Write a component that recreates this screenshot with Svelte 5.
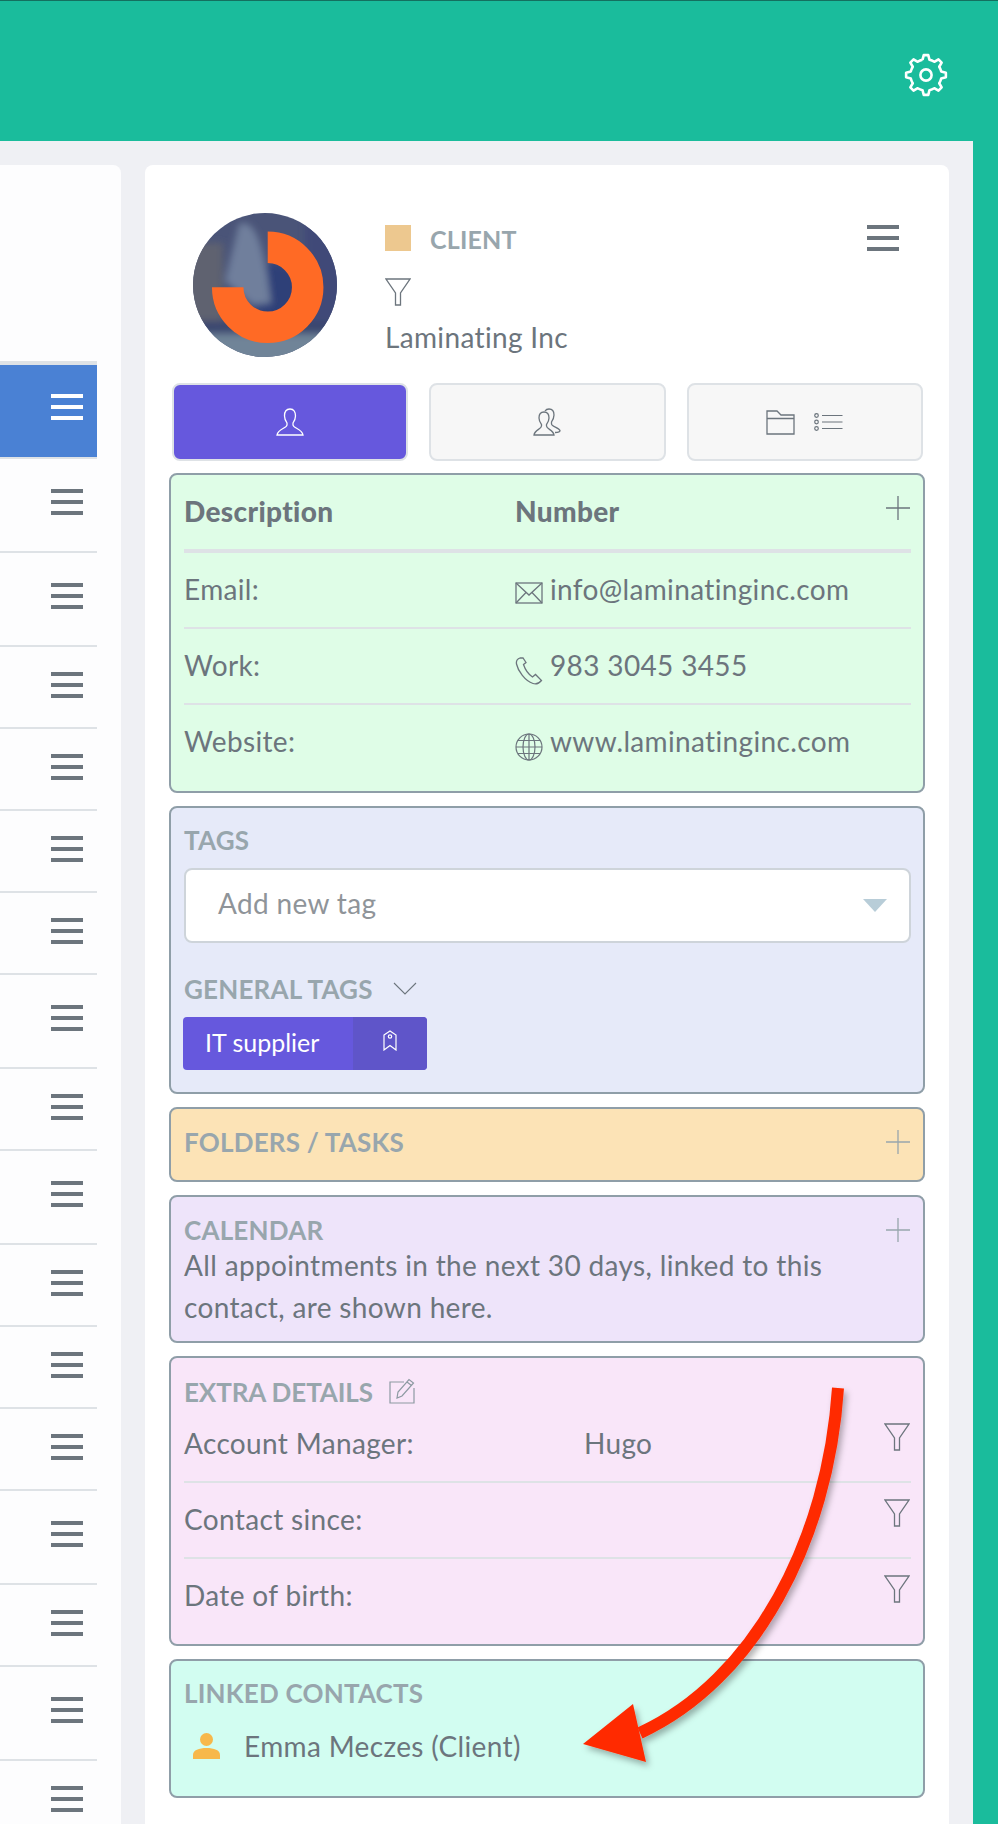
<script>
  // left list: only the menu icons are visible, rows vary in height
  const rowKinds = ['m', 't', 't', 's', 's', 's', 's', 't', 's', 't', 's', 's', 's', 't', 's', 't', 's']

  const contacts = [
    { label: 'Email:', value: 'info@laminatinginc.com', icon: 'mail' },
    { label: 'Work:', value: '983 3045 3455', icon: 'phone' },
    { label: 'Website:', value: 'www.laminatinginc.com', icon: 'globe' }
  ]
  const extras = [
    { label: 'Account Manager:', value: 'Hugo' },
    { label: 'Contact since:', value: '' },
    { label: 'Date of birth:', value: '' }
  ]

  function gearPath() {
    let d = ''
    for (let i = 0; i < 8; i++) {
      const a = (i * 45 - 90) * Math.PI / 180
      const pts = [[-13, 15.6], [-6.5, 20], [6.5, 20], [13, 15.6]].map(([o, r]) => {
        const t = a + o * Math.PI / 180
        return (22 + r * Math.cos(t)).toFixed(2) + ' ' + (22 + r * Math.sin(t)).toFixed(2)
      })
      d += (i === 0 ? 'M' : 'A15.6 15.6 0 0 1 ') + pts[0] + ' L' + pts[1] + ' L' + pts[2] + ' L' + pts[3] + ' '
    }
    return d + 'A15.6 15.6 0 0 1 ' + (22 + 15.6 * Math.cos((-103) * Math.PI / 180)).toFixed(2) + ' ' + (22 + 15.6 * Math.sin((-103) * Math.PI / 180)).toFixed(2)
  }
</script>

{#snippet burger(light)}
  <div class="burger" class:light><i></i><i></i><i></i></div>
{/snippet}

{#snippet funnel()}
  <svg class="funnel" viewBox="0 0 26 28" fill="none" stroke="currentColor" stroke-width="1.3">
    <path d="M1 1 H25 L15.5 15 V27 H10.5 V15 Z" />
  </svg>
{/snippet}

{#snippet plus()}
  <svg class="plus" viewBox="0 0 24 24" stroke="currentColor" stroke-width="1.3"><path d="M12 0 V24 M0 12 H24" /></svg>
{/snippet}

<div class="page">
  <header class="topbar">
    <svg class="gear" viewBox="0 0 44 44" fill="none" stroke="#fff" stroke-width="2.6" stroke-linejoin="round">
      <path d={gearPath()} />
      <circle cx="22" cy="22" r="5.6" />
    </svg>
  </header>

  <div class="content">
    <aside class="list">
      {#each rowKinds as kind}
        <div class="row {kind}">{@render burger(kind === 'm')}</div>
      {/each}
    </aside>

    <section class="detail">
      <div class="profile">
        <svg class="avatar" viewBox="0 0 144 144">
          <defs>
            <clipPath id="round"><circle cx="72" cy="72" r="72" /></clipPath>
            <filter id="soft" x="-20%" y="-20%" width="140%" height="140%"><feGaussianBlur stdDeviation="3.5" /></filter>
          </defs>
          <g clip-path="url(#round)">
            <rect width="144" height="144" fill="#4a5478" />
            <g filter="url(#soft)">
              <rect x="-10" y="30" width="40" height="80" fill="#5e6270" />
              <rect x="112" y="0" width="40" height="110" fill="#3f4a78" />
              <circle cx="82" cy="78" r="28" fill="#2f4078" />
              <path d="M46 11 C62 6 68 30 74 60 L78 90 L60 92 L32 68 Z" fill="#6f7f9c" />
              <rect x="-10" y="108" width="170" height="12" fill="#3b4670" />
              <rect x="-10" y="121" width="170" height="30" fill="#6f8498" />
            </g>
            <path d="M74.7 34.3 A40 40 0 1 1 34.7 74.3" fill="none" stroke="#ff6a25" stroke-width="31.5" />
          </g>
        </svg>
        <div class="who">
          <div class="kind"><span class="swatch"></span><span class="label">CLIENT</span></div>
          <div class="who-filter">{@render funnel()}</div>
          <div class="name">Laminating Inc</div>
        </div>
        <div class="who-menu">{@render burger(false)}</div>
      </div>

      <div class="tabs">
        <div class="tab active">
          <svg class="ic28" viewBox="0 0 28 28" fill="none" stroke="#fff" stroke-width="1.3">
            <path d="M14 1 C10 1 8.5 4 8.5 8 C8.5 11 10 13.5 11 15 V17 C11 20 2 21 1 27 H27 C26 21 17 20 17 17 V15 C18 13.5 19.5 11 19.5 8 C19.5 4 18 1 14 1 Z" />
          </svg>
        </div>
        <div class="tab">
          <svg class="ic28" viewBox="0 0 28 28" fill="none" stroke="#6c757d" stroke-width="1.3">
            <path d="M11 4 C7.5 4 6 7 6 10 C6 13 7.5 15 8.5 16.5 V18 C8.5 21 1.5 22 1 27 H21 C20.5 22 13.5 21 13.5 18 V16.5 C14.5 15 16 13 16 10 C16 7 14.500 4 11 4 Z" />
            <path d="M12 3 C13 1.500 14.500 1 16 1 C19.500 1 21 4 21 7 C21 10 19.500 12.500 18.500 14 V16 C18.500 18.500 26 19.500 27 22.500 C27 24 25 24.500 22 24.500" />
          </svg>
        </div>
        <div class="tab">
          <svg class="folder" viewBox="0 0 29 25" fill="none" stroke="#6c757d" stroke-width="1.3">
            <path d="M1 24 V1 H11 L15 5 H28 V24 Z M1 8.500 H28" />
          </svg>
          <svg class="tasks" viewBox="0 0 29 18" fill="none" stroke="#6c757d" stroke-width="1.2">
            <circle cx="2.500" cy="2.500" r="1.800" /><circle cx="2.500" cy="9" r="1.800" /><circle cx="2.500" cy="15.500" r="1.800" />
            <path d="M8 2.500 H28.500 M8 9 H28.500 M8 15.500 H28.500" />
          </svg>
        </div>
      </div>

      <div class="card green">
        <div class="line head">
          <strong class="col">Description</strong>
          <strong>Number</strong>
          <span class="tr">{@render plus()}</span>
        </div>
        {#each contacts as c}
          <div class="line contact">
            <span class="col">{c.label}</span>
            {#if c.icon === 'mail'}
              <svg class="ci" viewBox="0 0 28 22" fill="none" stroke="#6c757d" stroke-width="1.300">
                <rect x="1" y="1" width="26" height="20" /><path d="M1 1 L14 13 L27 1 M1 21 L11 10.500 M27 21 L17 10.500" />
              </svg>
            {:else if c.icon === 'phone'}
              <svg class="ci tall" viewBox="0 0 28 28" fill="none" stroke="#6c757d" stroke-width="1.300">
                <path d="M5 1 C2 2 1 4 1.500 7 C3 14 10 24 18 26.500 C21 27.500 24 26.500 26.500 23.500 L20.500 17.500 L17.500 20 C13 17 10 12 8.500 7.500 L11 5.500 L8 1 Z" />
              </svg>
            {:else}
              <svg class="ci tall" viewBox="0 0 28 28" fill="none" stroke="#6c757d" stroke-width="1.200">
                <circle cx="14" cy="14" r="13" /><ellipse cx="14" cy="14" rx="6" ry="13" /><path d="M14 1 V27 M1 14 H27 M3 7.500 H25 M3 20.500 H25" />
              </svg>
            {/if}
            <span class="val">{c.value}</span>
          </div>
        {/each}
      </div>

      <div class="card tags">
        <div class="label">TAGS</div>
        <div class="select">
          <span>Add new tag</span>
          <i class="caret"></i>
        </div>
        <div class="label general">
          GENERAL TAGS
          <svg class="chev" viewBox="0 0 24 13" fill="none" stroke="#6c757d" stroke-width="1.100"><path d="M1 1 L12 12 L23 1" /></svg>
        </div>
        <div class="tag">
          <span class="tag-name">IT supplier</span>
          <span class="tag-side">
            <svg viewBox="0 0 14 21" fill="none" stroke="#fff" stroke-width="1.200">
              <path d="M1 5 L7 1 L13 5 V20 L7 15.500 L1 20 Z" /><circle cx="7" cy="6.500" r="1.700" />
            </svg>
          </span>
        </div>
      </div>

      <div class="card folders">
        <div class="titled">
          <span class="label">FOLDERS / TASKS</span>
          <span class="pale">{@render plus()}</span>
        </div>
      </div>

      <div class="card calendar">
        <div class="titled">
          <span class="label">CALENDAR</span>
          <span class="pale">{@render plus()}</span>
        </div>
        <p>All appointments in the next 30 days, linked to this contact, are shown here.</p>
      </div>

      <div class="card extra">
        <div class="label edit-row">
          EXTRA DETAILS
          <svg class="edit" viewBox="0 0 26 26" fill="none" stroke="#8d9aa2" stroke-width="1.200">
            <path d="M15 4 H1 V25 H25 V10" />
            <path d="M8 20 L9 14 L20 1.500 L24.500 5 L13 18 Z M18 4 L22.500 7.500" />
          </svg>
        </div>
        {#each extras as e}
          <div class="line detail-row">
            <span class="col-wide">{e.label}</span>
            <span>{e.value}</span>
            <span class="tr funnel-tr">{@render funnel()}</span>
          </div>
        {/each}
      </div>

      <div class="card linked">
        <div class="label">LINKED CONTACTS</div>
        <div class="person">
          <svg viewBox="0 0 27 26" fill="#f7b84b">
            <ellipse cx="13.500" cy="6.500" rx="6.500" ry="6.500" />
            <path d="M0 26 V22 C0 17 6 15 13.500 15 C21 15 27 17 27 22 V26 Z" />
          </svg>
          <span>Emma Meczes (Client)</span>
        </div>
      </div>
    </section>
  </div>

  <!-- annotation drawn over the screenshot -->
  <svg class="arrow" viewBox="0 0 998 1824">
    <defs>
      <filter id="arrow-shadow" x="-20%" y="-20%" width="140%" height="140%">
        <feDropShadow dx="3" dy="4" stdDeviation="3" flood-color="#000" flood-opacity="0.3" />
      </filter>
    </defs>
    <g filter="url(#arrow-shadow)">
      <path d="M838 1388 C828 1540 755 1680 640 1733" fill="none" stroke="#ff2a00" stroke-width="12" />
      <path d="M583 1744 L633 1704 L646 1762 Z" fill="#ff2a00" />
    </g>
  </svg>
</div>

<style>
  :global(body) {
    background: #1abc9c;
  }

  .page {
    position: relative;
    width: 998px;
    height: 1824px;
    overflow: hidden;
    font-family: Lato, "Liberation Sans", sans-serif;
    font-size: 28px;
    letter-spacing: 0.35px;
    line-height: 42px;
    color: #6c757d;
  }

  .topbar {
    height: 140px;
    border-top: 1px solid #14705f;
    background: #1abc9c;
    display: flex;
    justify-content: flex-end;
    align-items: flex-start;
    padding-right: 50px;
  }

  .gear {
    width: 44px;
    height: 44px;
    margin-top: 52px;
  }

  .content {
    width: 973px;
    height: 1683px;
    box-sizing: border-box;
    background: #eff0f4;
    padding: 24px 24px 0 0;
    display: flex;
    gap: 24px;
  }

  .list {
    width: 121px;
    flex: none;
    box-sizing: border-box;
    padding: 196px 24px 0 0;
    background: #fdfdfe;
    border-radius: 0 8px 0 0;
  }

  .row {
    box-sizing: border-box;
    border-bottom: 2px solid #dee2e6;
    padding-left: 51px;
  }

  .row.m {
    height: 98px;
    border-top: 4px solid #dee2e6;
    background: #4a81d4;
    padding-top: 29px;
  }

  .row.t {
    height: 94px;
    padding-top: 30px;
  }

  .row.s {
    height: 82px;
    padding-top: 25px;
  }

  .burger {
    width: 32px;
    display: flex;
    flex-direction: column;
    gap: 7px;
  }

  .burger i {
    display: block;
    height: 4px;
    background: #6c757d;
  }

  .burger.light i {
    background: #fff;
  }

  .detail {
    width: 804px;
    flex: none;
    box-sizing: border-box;
    padding: 0 24px;
    background: #fff;
    border-radius: 8px 8px 0 0;
  }

  .profile {
    height: 218px;
    display: flex;
    align-items: flex-start;
  }

  .avatar {
    width: 144px;
    height: 144px;
    margin: 48px 48px 0 24px;
    flex: none;
  }

  .who {
    padding-top: 60px;
  }

  .kind {
    display: flex;
    align-items: center;
    height: 26px;
    gap: 19px;
  }

  .swatch {
    width: 26px;
    height: 26px;
    background: #edc88f;
  }

  .kind .label {
    margin-top: 2px;
    font-size: 25px;
  }

  .label {
    font-weight: 700;
    font-size: 26px;
    letter-spacing: 0.2px;
    line-height: 32px;
    color: #98a6ad;
  }

  .who-filter {
    margin-top: 27px;
    height: 28px;
    color: #6c757d;
  }

  .funnel {
    display: block;
    width: 26px;
    height: 28px;
  }

  .name {
    margin-top: 10px;
  }

  .who-menu {
    margin: 60px 2px 0 auto;
    padding-right: 24px;
  }

  .tabs {
    display: grid;
    grid-template-columns: repeat(3, 1fr);
    gap: 21px;
    margin: 0 2px 12px 3px;
  }

  .tab {
    height: 78px;
    box-sizing: border-box;
    border: 2px solid #dee2e6;
    border-radius: 8px;
    background: #f7f7f7;
    display: flex;
    align-items: center;
    justify-content: center;
    gap: 19px;
  }

  .tab.active {
    background: #6658dd;
  }

  .ic28 {
    width: 28px;
    height: 28px;
  }

  .folder {
    width: 29px;
    height: 25px;
  }

  .tasks {
    width: 29px;
    height: 18px;
  }

  .card {
    border: 2px solid #8f9ea8;
    border-radius: 8px;
    padding: 0 12px 0 13px;
    margin-bottom: 13px;
  }

  .green {
    background: #dffde7;
    padding-bottom: 12px;
  }

  .line {
    display: flex;
    align-items: center;
    position: relative;
    height: 72px;
    padding-bottom: 2px;
    border-bottom: 2px solid #dee2e6;
  }

  .line:last-child {
    border-bottom: 0;
  }

  .head {
    border-bottom-width: 4px;
    font-weight: 700;
  }

  .col {
    width: 331px;
    flex: none;
  }

  .tr {
    position: absolute;
    right: 1px;
    top: 21px;
  }

  .plus {
    display: block;
    width: 24px;
    height: 24px;
  }

  .ci {
    width: 28px;
    height: 22px;
    margin: 8px 7px 0 0;
    flex: none;
  }

  .ci.tall {
    height: 28px;
    margin-top: 12px;
  }

  .tags {
    background: #e6eaf9;
    padding-top: 16px;
    padding-bottom: 22px;
  }

  .select {
    height: 75px;
    margin-top: 12px;
    box-sizing: border-box;
    border: 2px solid #ced4da;
    border-radius: 8px;
    background: #fff;
    display: flex;
    align-items: center;
    justify-content: space-between;
    padding: 0 22px 0 32px;
    color: #8f9499;
  }

  .select span {
    margin-top: -6px;
  }

  .caret {
    width: 0;
    height: 0;
    border-left: 12px solid transparent;
    border-right: 12px solid transparent;
    border-top: 13px solid #b8cdd8;
  }

  .general {
    margin-top: 30px;
    display: flex;
    align-items: center;
    gap: 20px;
  }

  .chev {
    width: 24px;
    height: 13px;
    margin-top: -2px;
  }

  .tag {
    margin-top: 12px;
    width: 244px;
    height: 53px;
    margin-left: -1px;
    border-radius: 4px;
    overflow: hidden;
    display: flex;
    background: #6658dd;
    color: #fff;
    font-size: 25px;
    letter-spacing: 0;
  }

  .tag-name {
    width: 170px;
    box-sizing: border-box;
    padding-left: 22px;
    line-height: 50px;
  }

  .tag-side {
    flex: 1;
    background: #5f55c9;
    display: flex;
    align-items: center;
    justify-content: center;
    padding-bottom: 6px;
  }

  .tag-side svg {
    width: 14px;
    height: 21px;
  }

  .folders {
    background: #fce3b6;
    padding-top: 17px;
    padding-bottom: 22px;
  }

  .titled {
    display: flex;
    justify-content: space-between;
    align-items: center;
  }

  .pale {
    color: #98a6ad;
    margin-right: 1px;
  }

  .calendar {
    background: #eee4fa;
    padding-top: 17px;
    padding-bottom: 13px;
  }

  .calendar p {
    margin: -2px 0 0;
  }

  .extra {
    background: #f9e6f9;
    padding-top: 18px;
    padding-bottom: 11px;
  }

  .edit-row {
    display: flex;
    align-items: center;
    gap: 16px;
    margin-bottom: -1px;
    letter-spacing: -0.1px;
  }

  .edit {
    width: 26px;
    height: 26px;
    margin-top: -3px;
  }

  .col-wide {
    width: 400px;
    flex: none;
  }

  .funnel-tr {
    top: 16px;
    color: #6c757d;
  }

  .linked {
    background: #d2fdf1;
    padding-top: 16px;
    padding-bottom: 29px;
  }

  .person {
    margin-top: 16px;
    display: flex;
    align-items: center;
    gap: 24px;
    padding-left: 9px;
  }

  .person svg {
    width: 27px;
    height: 26px;
  }

  .arrow {
    position: absolute;
    left: 0;
    top: 0;
    width: 998px;
    height: 1824px;
    pointer-events: none;
  }
</style>
